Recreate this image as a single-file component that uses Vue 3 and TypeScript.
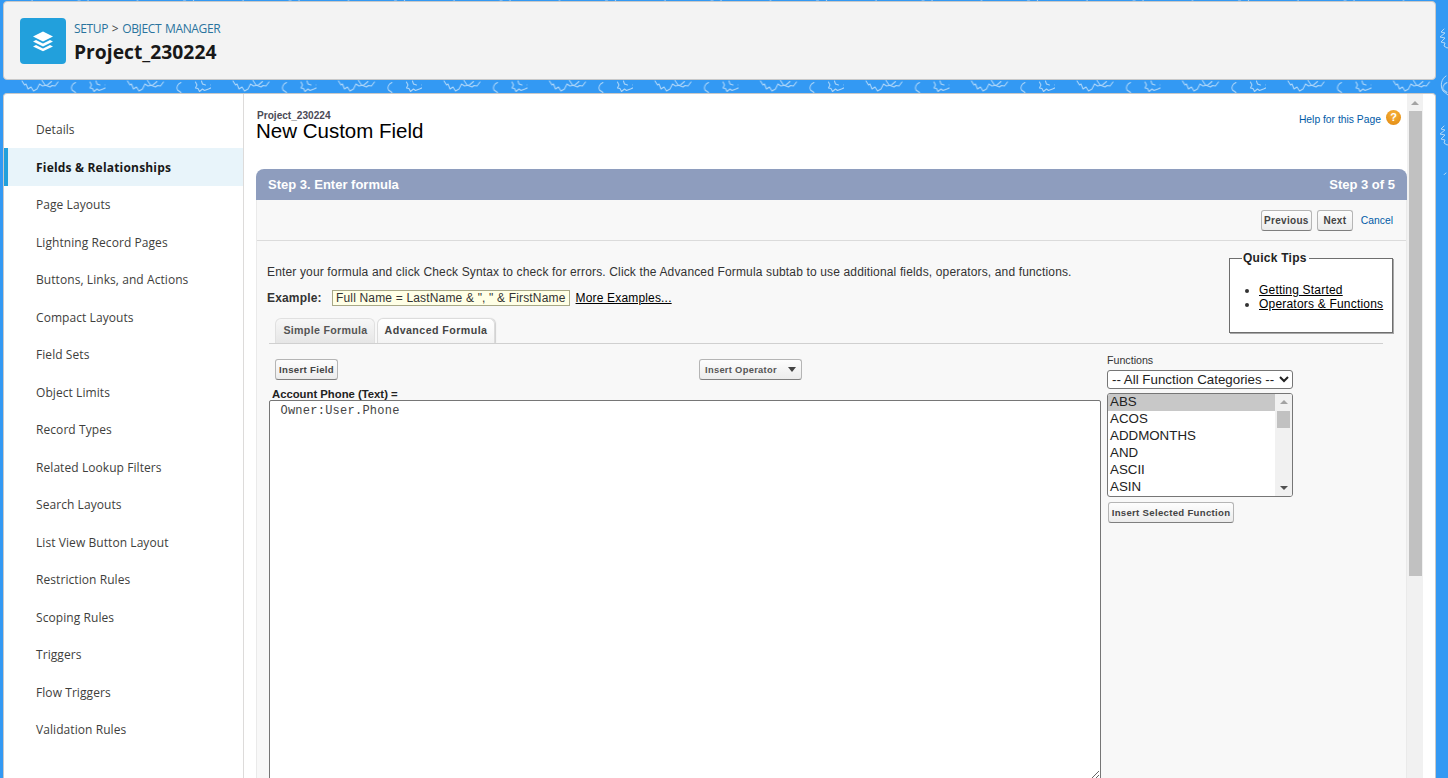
<script setup lang="ts">
const navItems: string[] = [
  'Details', 'Fields & Relationships', 'Page Layouts', 'Lightning Record Pages',
  'Buttons, Links, and Actions', 'Compact Layouts', 'Field Sets', 'Object Limits',
  'Record Types', 'Related Lookup Filters', 'Search Layouts', 'List View Button Layout',
  'Restriction Rules', 'Scoping Rules', 'Triggers', 'Flow Triggers', 'Validation Rules',
]
const activeNav = 'Fields & Relationships'
const functions: string[] = ['ABS', 'ACOS', 'ADDMONTHS', 'AND', 'ASCII', 'ASIN']
const formula = ' Owner:User.Phone'
</script>

<template>
  <div class="page">
    <svg class="wallpaper" width="1448" height="778" aria-hidden="true">
      <defs>
        <pattern id="leaf" x="0" y="0" width="105.5" height="105" patternUnits="userSpaceOnUse">
          <g fill="none" stroke="#b2d8f9" stroke-width="1" stroke-linejoin="round" stroke-linecap="round">
            <path d="M22 81 l2.5 4 1.5-1 2 5 3-2 2.5 4 3.5-2 2.5-5 3 2 5-1 4-3.5" />
            <path d="M42 80.5 l3 4.5 5 2 2-1.5 3 .5 3-4" />
            <path d="M75.500 82.500 c-3.500 1.500-5 5-3.500 7.500 l3.500 2.500" />
            <path d="M90 82 l1.500 3 -1.500 3 2.500 .5 1.500 3 3-2.500 2 1.500 4-1.500 4.500-2 -2-2 2-4" />
            <path d="M96 81 l1 3 3 1 M32 0v1.500 M78 0h2 M88 0v1.500" />
          </g>
        </pattern>
        <pattern id="leaf-side" x="1430" y="0" width="30" height="97" patternUnits="userSpaceOnUse">
          <g fill="none" stroke="#b2d8f9" stroke-width="1" stroke-linecap="round" stroke-linejoin="round">
            <path d="M14 29 l-3 3 4 1 -5 4 5 1 -4 4 4 1 -1 3 3 2 3 -1" />
            <path d="M16 76 c-5 3-6 10-3 15 l5 4" />
          </g>
        </pattern>
      </defs>
      <rect width="1448" height="778" fill="#3399f3" />
      <rect width="1448" height="100" fill="url(#leaf)" />
      <rect x="1430" width="18" height="175" fill="url(#leaf-side)" />
    </svg>

    <header class="hero">
      <div class="hero-icon">
        <svg width="24" height="24" viewBox="0 0 24 24" fill="#fff">
          <path d="M12 2.4 22 7.4 12 12.4 2 7.4Z" />
          <path d="M5 10.9 12 14.4 19 10.9 22 12.4 12 17.4 2 12.4Z" />
          <path d="M5 15.9 12 19.4 19 15.9 22 17.4 12 22.2 2 17.4Z" />
        </svg>
      </div>
      <div class="hero-text">
        <div class="crumbs"><a>SETUP</a> <span class="sep">&gt;</span> <a>OBJECT MANAGER</a></div>
        <h1>Project_230224</h1>
      </div>
    </header>

    <main class="panel">
      <nav class="sidebar">
        <a
          v-for="item in navItems"
          :key="item"
          class="nav-item"
          :class="{ active: item === activeNav }"
        >{{ item }}</a>
      </nav>

      <section class="frame">
        <div class="frame-content">
          <div class="title-row">
            <div>
              <div class="object-name">Project_230224</div>
              <h2>New Custom Field</h2>
            </div>
            <div class="help">
              <a>Help for this Page</a>
              <span class="help-icon">?</span>
            </div>
          </div>

          <div class="step-bar">
            <span>Step 3. Enter formula</span>
            <span>Step 3 of 5</span>
          </div>

          <div class="step-body">
            <div class="actions">
              <button class="btn prev">Previous</button>
              <button class="btn next">Next</button>
              <a class="cancel">Cancel</a>
            </div>

            <div class="formula-section">
              <div class="intro">
                <div class="intro-text">
                  <p class="lead">Enter your formula and click Check Syntax to check for errors. Click the Advanced Formula subtab to use additional fields, operators, and functions.</p>
                  <div class="example">
                    <strong>Example:</strong>
                    <span class="example-box">Full Name = LastName &amp; ", " &amp; FirstName</span>
                    <a class="plain-link">More Examples...</a>
                  </div>
                </div>
                <fieldset class="tips">
                  <legend>Quick Tips</legend>
                  <ul>
                    <li><a class="plain-link">Getting Started</a></li>
                    <li><a class="plain-link">Operators &amp; Functions</a></li>
                  </ul>
                </fieldset>
              </div>

              <div class="tabs">
                <div class="tab">Simple Formula</div>
                <div class="tab current">Advanced Formula</div>
              </div>

              <div class="editor">
                <div class="editor-main">
                  <div class="editor-tools">
                    <button class="btn">Insert Field</button>
                    <button class="btn operator">Insert Operator <span class="caret"></span></button>
                  </div>
                  <div class="formula-label">Account Phone (Text) =</div>
                  <textarea class="formula" readonly :value="formula"></textarea>
                </div>

                <aside class="functions">
                  <label class="functions-label">Functions</label>
                  <select class="category">
                    <option>-- All Function Categories --</option>
                  </select>
                  <div class="listbox">
                    <ul class="list">
                      <li v-for="(fn, i) in functions" :key="fn" :class="{ selected: i === 0 }">{{ fn }}</li>
                    </ul>
                    <div class="list-scroll">
                      <span class="mini-up"></span>
                      <span class="mini-thumb"></span>
                      <span class="mini-down"></span>
                    </div>
                  </div>
                  <button class="btn insert-fn">Insert Selected Function</button>
                </aside>
              </div>
            </div>
          </div>
        </div>

        <div class="scrollbar">
          <span class="arrow-up"></span>
          <span class="thumb"></span>
        </div>
      </section>

      <div class="panel-gutter"></div>
    </main>
  </div>
</template>

<style>
html, body { margin: 0; overflow: hidden; }
</style>

<style scoped>
.page {
  position: relative;
  width: 1448px;
  height: 778px;
  overflow: hidden;
  display: flex;
  flex-direction: column;
  padding: 1px 12px 0 3px;
  box-sizing: border-box;
  font-family: "Liberation Sans", Arial, sans-serif;
}
.wallpaper { position: absolute; left: 0; top: 0; }

.hero {
  position: relative;
  height: 79px;
  flex: none;
  box-sizing: border-box;
  background: #f3f3f3;
  border: 1px solid #c9c9c9;
  border-radius: 4px;
  display: flex;
  align-items: center;
  gap: 8px;
  padding: 0 0 0 16px;
}
.hero-icon {
  width: 46px;
  height: 46px;
  border-radius: 4px;
  background: #22a0dc;
  display: flex;
  align-items: center;
  justify-content: center;
}
.hero-text { margin-top: 3px; }
.crumbs {
  font-family: "Open Sans", sans-serif;
  font-size: 12px;
  line-height: 16px;
  color: #2a739e;
  letter-spacing: -0.35px;
  word-spacing: 1px;
}
.crumbs .sep { color: #444; }
h1 {
  margin: 3px 0 0;
  font-family: "Open Sans", sans-serif;
  font-size: 19.3px;
  line-height: 24px;
  font-weight: 700;
  color: #181818;
}

.panel {
  position: relative;
  flex: 1;
  min-height: 0;
  margin-top: 13px;
  display: flex;
  background: #fff;
  border-top: 1px solid #c9c9c9;
  border-left: 1px solid #c9c9c9;
  border-right: 1px solid #c9c9c9;
  border-radius: 4px 4px 0 0;
  box-sizing: border-box;
  overflow: hidden;
}

.sidebar {
  width: 240px;
  flex: none;
  box-sizing: border-box;
  border-right: 1px solid #dddbda;
  padding-top: 17px;
  display: flex;
  flex-direction: column;
  font-family: "Open Sans", sans-serif;
  font-size: 12px;
  letter-spacing: 0.07px;
  color: #3e3e3c;
}
.nav-item {
  height: 37.5px;
  flex: none;
  display: flex;
  align-items: center;
  padding-left: 32px;
  box-sizing: border-box;
}
.nav-item.active {
  margin: -0.5px 0 0.5px;
  padding-top: 1px;
  background: #e8f4fa;
  border-left: 4px solid #22a0dc;
  padding-left: 28px;
  font-weight: 700;
  letter-spacing: 0.19px;
  color: #181818;
}

.frame { flex: 1; min-width: 0; display: flex; }
.frame-content {
  flex: 1;
  min-width: 0;
  padding: 0 0 0 12px;
}
.title-row {
  display: flex;
  justify-content: space-between;
  height: 75px;
  box-sizing: border-box;
  padding-top: 16px;
}
.object-name {
  font-size: 10.1px;
  line-height: 9px;
  padding-top: 1px;
  font-weight: 700;
  color: #4a4a56;
  padding-left: 1px;
}
h2 {
  margin: 0;
  font-size: 20.5px;
  line-height: 22px;
  font-weight: 400;
  color: #000;
}
.help {
  display: flex;
  align-items: flex-start;
  gap: 5px;
  padding-right: 6px;
  font-size: 10.33px;
  line-height: 12px;
  color: #015ba7;
}
.help a { margin-top: 4px; }
.help-icon {
  width: 15px;
  height: 15px;
  border-radius: 50%;
  background: radial-gradient(circle at 50% 30%, #f7b33a, #e0860f);
  color: #fff;
  font-size: 11px;
  font-weight: 700;
  line-height: 15px;
  text-align: center;
}

.step-bar {
  height: 31px;
  background: #8e9dbe;
  border-radius: 8px 8px 0 0;
  box-sizing: border-box;
  display: flex;
  justify-content: space-between;
  align-items: center;
  padding: 0 12px;
  font-size: 13px;
  font-weight: 700;
  color: #fff;
}
.step-body {
  background: #f8f8f8;
  border-left: 1px solid #eaeaea;
  border-right: 1px solid #eaeaea;
  height: 600px;
}
.actions {
  height: 41px;
  box-sizing: border-box;
  border-bottom: 1px solid #dbdbdb;
  display: flex;
  justify-content: flex-end;
  align-items: center;
  gap: 5px;
  padding: 1px 13px 0 0;
}
.cancel {
  margin-left: 3px;
  font-size: 10.33px;
  color: #015ba7;
}
.btn {
  height: 21px;
  box-sizing: border-box;
  padding: 0;
  white-space: nowrap;
  border: 1px solid #b5b5b5;
  border-bottom-color: #7f7f7f;
  border-radius: 3px;
  background: linear-gradient(#fdfdfd, #ececec);
  font-family: "Liberation Sans", Arial, sans-serif;
  font-size: 9.6px;
  font-weight: 700;
  color: #444;
  letter-spacing: 0.3px;
}
.prev { width: 51px; font-size: 10px; }
.next { width: 36px; font-size: 10px; }

.formula-section { padding: 0 13px 0 10px; }
.intro {
  display: flex;
  justify-content: space-between;
  height: 77px;
  position: relative;
}
.lead {
  margin: 24px 0 0;
  font-size: 12px;
  line-height: 14px;
  color: #333;
  letter-spacing: 0.15px;
  white-space: nowrap;
}
.example {
  margin-top: 11px;
  display: flex;
  align-items: center;
  font-size: 12px;
  letter-spacing: 0.17px;
  color: #222;
}
.example strong { width: 65px; color: #333; }
.example-box {
  border: 1px solid #a8a887;
  background: #ffffe6;
  padding: 0 3px;
  line-height: 14px;
  margin-right: 6px;
  color: #333;
}
.plain-link { color: #000; text-decoration: underline; }
.tips {
  position: absolute;
  right: 0;
  top: 10px;
  width: 164px;
  height: 82px;
  margin: 0;
  box-sizing: border-box;
  background: #fff;
  border: 1px solid #6e6e6e;
  box-shadow: 1px 1px 0 #a8a8a8;
  padding: 0;
  font-size: 12px;
  letter-spacing: 0.2px;
}
.tips legend {
  margin-left: 12px;
  padding: 0 2px 0 1px;
  font-weight: 700;
  font-size: 12px;
  line-height: 14px;
  color: #222;
  letter-spacing: 0.25px;
}
.tips ul { margin: 18px 0 0; padding-left: 29px; line-height: 14px; color: #333; }

.tabs {
  display: flex;
  gap: 2px;
  height: 26px;
  margin-top: 0;
  margin-left: 2px;
  padding-left: 6px;
  margin-right: 10px;
  box-sizing: border-box;
  border-bottom: 1px solid #d0d0d0;
}
.tab {
  width: 100px;
  box-sizing: border-box;
  height: 25px;
  line-height: 23px;
  text-align: center;
  font-size: 10.67px;
  font-weight: 700;
  color: #555;
  letter-spacing: 0.3px;
  padding-left: 1px;
  background: linear-gradient(#f7f7f7, #e6e6e6);
  border: 1px solid #e0e0e0;
  border-bottom: none;
  border-radius: 6px 6px 0 0;
}
.tab.current {
  width: 118px;
  padding-left: 0;
  background: linear-gradient(#fff, #f3f3f3);
  border-color: #dcdcdc;
  box-shadow: 1px 0 1px #cfcfcf;
  color: #444;
  letter-spacing: 0.43px;
}

.editor { display: flex; gap: 6px; padding-left: 2px; }
.editor-main { width: 832px; flex: none; }
.editor-tools {
  display: flex;
  align-items: center;
  gap: 361px;
  padding: 15px 0 0 6px;
}
.editor-tools .btn { width: 63px; }
.editor-tools .operator {
  width: 103px;
  text-align: left;
  padding-left: 5px;
  display: flex;
  align-items: center;
  justify-content: space-between;
  padding-right: 5px;
  font-size: 9.33px;
  color: #555;
}
.caret {
  width: 0;
  height: 0;
  border-left: 4px solid transparent;
  border-right: 4px solid transparent;
  border-top: 5px solid #444;
}
.formula-label {
  padding: 8px 0 0 3px;
  font-size: 11.3px;
  line-height: 12px;
  font-weight: 700;
  color: #222;
}
.formula {
  display: block;
  width: 832px;
  height: 380px;
  box-sizing: border-box;
  margin: 0;
  padding: 3px 2px 2px 3px;
  border: 1px solid #767676;
  border-radius: 2px 2px 0 0;
  background: #fff;
  font-family: "Liberation Mono", "Courier New", monospace;
  font-size: 12px;
  letter-spacing: 0.25px;
  line-height: 14px;
  color: #444;
  outline: none;
}

.functions { width: 186px; flex: none; padding-top: 10px; }
.functions-label {
  display: block;
  font-size: 10.67px;
  line-height: 12px;
  color: #333;
  margin-bottom: 4px;
}
.category {
  display: block;
  width: 186px;
  height: 19px;
  box-sizing: border-box;
  padding: 0;
  border: 1px solid #767676;
  border-radius: 3px;
  background: #fff;
  font-family: "Liberation Sans", Arial, sans-serif;
  font-size: 13.33px;
  color: #222;
}
.listbox {
  display: flex;
  margin-top: 4px;
  height: 104px;
  box-sizing: border-box;
  border: 1px solid #767676;
  border-radius: 3px;
  background: #fff;
  overflow: hidden;
}
.list {
  flex: 1;
  margin: 0;
  padding: 0;
  list-style: none;
  font-size: 13.33px;
  line-height: 15.1px;
  color: #222;
}
.list li { padding: 0 0 2px 2px; }
.list li.selected { background: #c8c8c8; }
.list-scroll {
  width: 17px;
  background: #f1f1f1;
  position: relative;
}
.mini-up {
  position: absolute;
  left: 5px;
  top: 6px;
  border-left: 4px solid transparent;
  border-right: 4px solid transparent;
  border-bottom: 4px solid #a3a3a3;
}
.mini-thumb {
  position: absolute;
  left: 2px;
  top: 17px;
  width: 13px;
  height: 17px;
  background: #c1c1c1;
}
.mini-down {
  position: absolute;
  left: 5px;
  bottom: 6px;
  border-left: 4px solid transparent;
  border-right: 4px solid transparent;
  border-top: 4px solid #505050;
}
.insert-fn { display: block; margin: 5px 0 0 1px; width: 126px; }

.scrollbar {
  width: 16px;
  flex: none;
  background: #f1f1f1;
  position: relative;
}
.arrow-up {
  position: absolute;
  left: 4px;
  top: 7px;
  border-left: 4px solid transparent;
  border-right: 4px solid transparent;
  border-bottom: 4px solid #a3a3a3;
}
.thumb {
  position: absolute;
  left: 2px;
  top: 17px;
  width: 13px;
  height: 465px;
  background: #c1c1c1;
}
.panel-gutter { width: 12px; flex: none; }
</style>
